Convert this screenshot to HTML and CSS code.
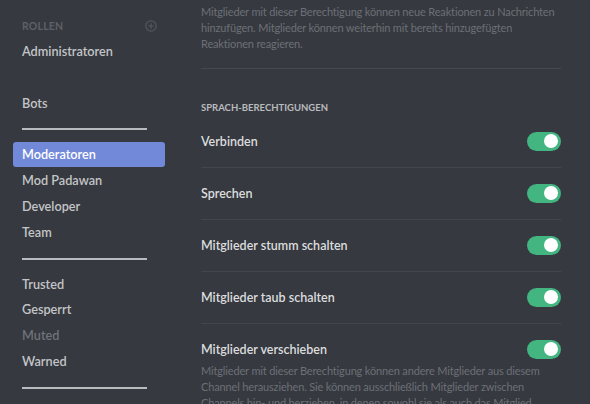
FILE: index.html
```html
<!DOCTYPE html>
<html lang="de">
<head>
    <meta charset="UTF-8">
    <meta name="viewport" content="width=device-width, initial-scale=1.0">
    <title>Rollen</title>
    <link rel="stylesheet" href="styles.css">
</head>
<body>
    <div class="layout">
        <aside class="sidebar">
            <div class="sidebar-header">
                <span>Rollen</span>
                <svg class="add-icon" width="12" height="12" viewBox="0 0 12 12">
                    <circle cx="6" cy="6" r="5.2" fill="none" stroke="#54585f" stroke-width="1.2"/>
                    <path d="M6 3.3v5.4M3.3 6h5.4" stroke="#54585f" stroke-width="1.2"/>
                </svg>
            </div>
            <ul class="role-list">
                <li class="role">Administratoren</li>
                <li class="role"></li>
                <li class="role">Bots</li>
                <li class="role-divider"><span></span></li>
                <li class="role selected">Moderatoren</li>
                <li class="role">Mod Padawan</li>
                <li class="role">Developer</li>
                <li class="role">Team</li>
                <li class="role-divider"><span></span></li>
                <li class="role">Trusted</li>
                <li class="role">Gesperrt</li>
                <li class="role muted">Muted</li>
                <li class="role">Warned</li>
                <li class="role-divider"><span></span></li>
            </ul>
        </aside>

        <main class="content">
            <p class="description">Mitglieder mit dieser Berechtigung können neue Reaktionen zu Nachrichten hinzufügen. Mitglieder können weiterhin mit bereits hinzugefügten Reaktionen reagieren.</p>
            <div class="section-divider"></div>

            <h2 class="section-title">Sprach-Berechtigungen</h2>

            <div class="permission">
                <div class="permission-row">
                    <span class="permission-name">Verbinden</span>
                    <span class="toggle on"></span>
                </div>
            </div>
            <div class="permission">
                <div class="permission-row">
                    <span class="permission-name">Sprechen</span>
                    <span class="toggle on"></span>
                </div>
            </div>
            <div class="permission">
                <div class="permission-row">
                    <span class="permission-name">Mitglieder stumm schalten</span>
                    <span class="toggle on"></span>
                </div>
            </div>
            <div class="permission">
                <div class="permission-row">
                    <span class="permission-name">Mitglieder taub schalten</span>
                    <span class="toggle on"></span>
                </div>
            </div>
            <div class="permission last">
                <div class="permission-row">
                    <span class="permission-name">Mitglieder verschieben</span>
                    <span class="toggle on"></span>
                </div>
                <p class="description">Mitglieder mit dieser Berechtigung können andere Mitglieder aus diesem Channel herausziehen. Sie können ausschließlich Mitglieder zwischen Channels hin- und herziehen, in denen sowohl sie als auch das Mitglied Zugriff haben.</p>
            </div>
        </main>
    </div>
</body>
</html>
```

FILE: styles.css
```css
body {
    margin: 0;
    background-color: #36393f;
    font-family: Lato, "Open Sans", sans-serif;
    overflow: hidden;
    height: 404px;
}

.layout {
    display: flex;
}

/* sidebar */
.sidebar {
    width: 190px;
    flex-shrink: 0;
    padding: 0 25px 0 13px;
    box-sizing: border-box;
}
.sidebar-header {
    display: flex;
    align-items: center;
    justify-content: space-between;
    height: 26px;
    margin-top: 13px;
    padding: 0 8px 0 9px;
    font-size: 10.5px;
    font-weight: 700;
    letter-spacing: 0.2px;
    text-transform: uppercase;
    color: #5d6168;
}
.add-icon {
    display: block;
}
.role-list {
    list-style: none;
    margin: 0;
    padding: 0;
}
.role {
    height: 25.85px;
    line-height: 25.85px;
    padding-left: 9px;
    font-size: 12.7px;
    font-weight: 600;
    color: #c3c5c8;
    border-radius: 3px;
}
.role.selected {
    background-color: #7289da;
    color: #ffffff;
    height: 25px;
    line-height: 25px;
    margin-bottom: 0.85px;
}
.role.muted {
    color: #6f737a;
}
.role-divider {
    height: 25.85px;
    display: flex;
    align-items: center;
    padding-left: 9px;
}
.role-divider span {
    display: block;
    width: 125px;
    height: 2px;
    background-color: #b9bbbe;
}

/* content */
.content {
    flex: 1;
    padding: 4px 29px 0 11px;
}
.description {
    margin: 0;
    font-size: 11px;
    letter-spacing: -0.15px;
    line-height: 16px;
    color: #6c7077;
}
.section-divider {
    height: 1px;
    background-color: #45484e;
    margin-top: 16px;
}
.section-title {
    margin: 33px 0 2px;
    font-size: 9.5px;
    line-height: 12px;
    font-weight: 700;
    text-transform: uppercase;
    color: #b9bbbe;
}
.permission {
    border-bottom: 1px solid #42454a;
    padding: 13px 0 14px;
}
.permission.last {
    border-bottom: none;
    padding-bottom: 0;
}
.permission-row {
    display: flex;
    align-items: center;
    justify-content: space-between;
    height: 24px;
}
.permission-name {
    font-size: 12.5px;
    font-weight: 600;
    color: #dcddde;
}
.permission.last .description {
    margin-top: 2px;
}
.toggle {
    position: relative;
    width: 34px;
    height: 19px;
    border-radius: 10px;
    background-color: #43b581;
}
.toggle::after {
    content: "";
    position: absolute;
    top: 2.5px;
    right: 3px;
    width: 14px;
    height: 14px;
    border-radius: 50%;
    background-color: #ffffff;
}
```
